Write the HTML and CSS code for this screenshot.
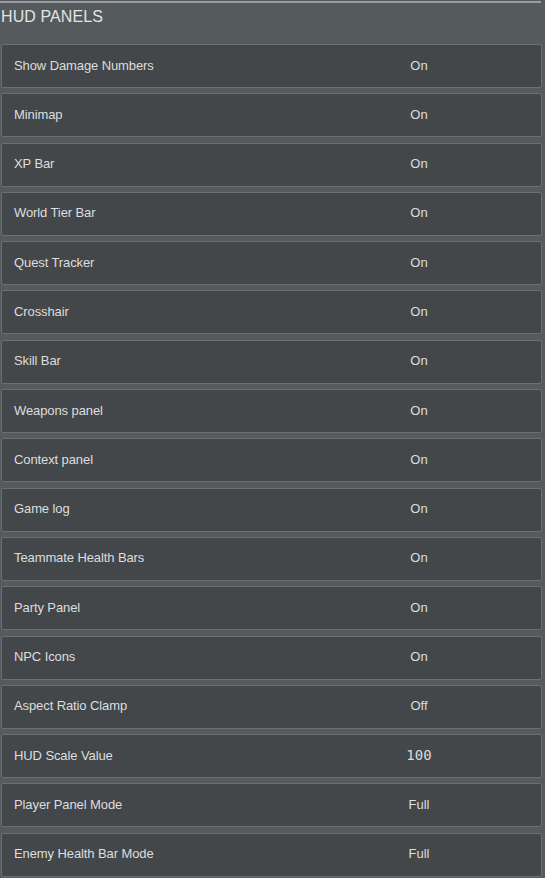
FILE: index.html
```html
<!DOCTYPE html>
<html>
<head>
<meta charset="UTF-8">
<title>HUD Panels</title>
<link rel="stylesheet" href="styles.css">
</head>
<body>
<div class="panel">
  <div class="topline"></div>
  <h2 class="title">HUD PANELS</h2>
  <div class="list">
    <div class="row"><span class="label">Show Damage Numbers</span><span class="value">On</span></div>
    <div class="row"><span class="label">Minimap</span><span class="value">On</span></div>
    <div class="row"><span class="label">XP Bar</span><span class="value">On</span></div>
    <div class="row"><span class="label">World Tier Bar</span><span class="value">On</span></div>
    <div class="row"><span class="label">Quest Tracker</span><span class="value">On</span></div>
    <div class="row"><span class="label">Crosshair</span><span class="value">On</span></div>
    <div class="row"><span class="label">Skill Bar</span><span class="value">On</span></div>
    <div class="row"><span class="label">Weapons panel</span><span class="value">On</span></div>
    <div class="row"><span class="label">Context panel</span><span class="value">On</span></div>
    <div class="row"><span class="label">Game log</span><span class="value">On</span></div>
    <div class="row"><span class="label">Teammate Health Bars</span><span class="value">On</span></div>
    <div class="row"><span class="label">Party Panel</span><span class="value">On</span></div>
    <div class="row"><span class="label">NPC Icons</span><span class="value">On</span></div>
    <div class="row"><span class="label">Aspect Ratio Clamp</span><span class="value">Off</span></div>
    <div class="row"><span class="label">HUD Scale Value</span><span class="value mono">100</span></div>
    <div class="row"><span class="label">Player Panel Mode</span><span class="value">Full</span></div>
    <div class="row"><span class="label">Enemy Health Bar Mode</span><span class="value">Full</span></div>
  </div>
</div>
</body>
</html>
```

FILE: styles.css
```css
html, body {
	margin: 0;
	padding: 0;
	background: #555a5d;
}
body {
	font-family: "Liberation Sans", Arial, sans-serif;
	color: #dcdedf;
	width: 545px;
	height: 878px;
	overflow: hidden;
}
.panel {
	display: flex;
	flex-direction: column;
}
.topline {
	height: 2px;
	margin-top: 1px;
	width: 541px;
	background: #9a9ea0;
}
.title {
	margin: 0;
	padding: 5px 0 0 1px;
	height: 36px;
	font-size: 16px;
	font-weight: normal;
	color: #e2e4e5;
	letter-spacing: 0.1px;
}
.list {
	display: flex;
	flex-direction: column;
	gap: 5.3px;
	padding-left: 1px;
	width: 541px;
}
.row {
	display: grid;
	grid-template-columns: 1fr 244px;
	align-items: center;
	height: 44px;
	box-sizing: border-box;
	padding-bottom: 2px;
	border: 1px solid #6b6f72;
	border-radius: 2px;
	background: #43474a;
	font-size: 13px;
}
.label {
	padding-left: 12px;
	letter-spacing: -0.1px;
}
.value {
	text-align: center;
}
.mono {
	font-family: "DejaVu Sans Mono", monospace;
	font-size: 14px;
}
```
